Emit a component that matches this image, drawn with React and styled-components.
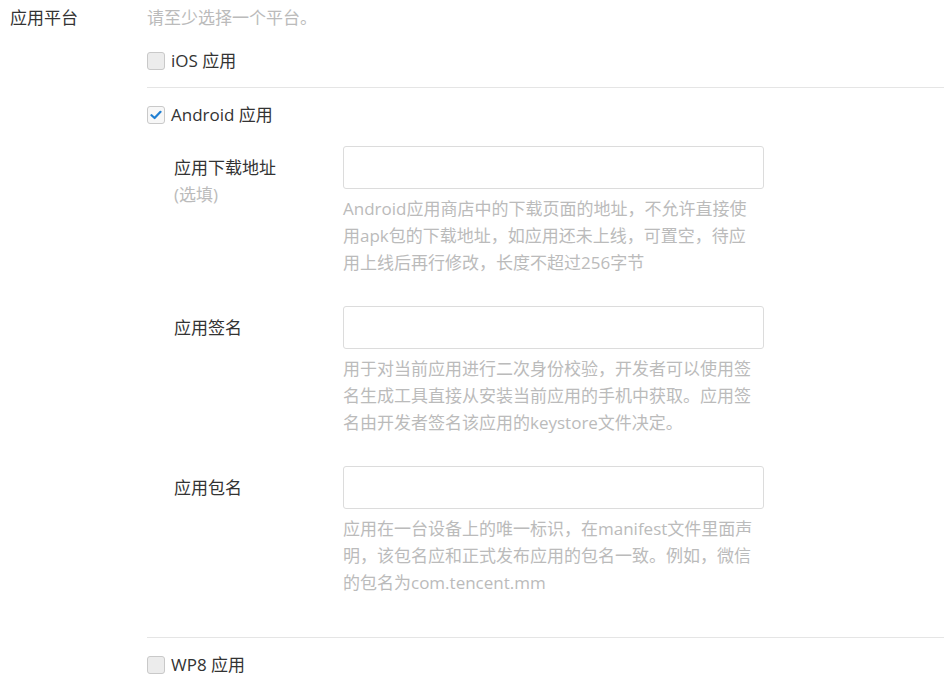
import styled, { createGlobalStyle } from 'styled-components'

const GlobalStyle = createGlobalStyle`
  body {
    margin: 0;
    background: #ffffff;
    font-family: "Open Sans", "Noto Sans CJK SC", sans-serif;
    font-size: 17px;
    line-height: 27px;
    color: #333333;
  }
`

const Page = styled.div`
  display: flex;
  padding-top: 4px;
`

const MainLabel = styled.div`
  width: 137px;
  padding-left: 10px;
  flex-shrink: 0;
`

const Body = styled.div`
  flex: 1;
`

const Hint = styled.div`
  color: #bbbbbb;
  margin-bottom: 3px;
`

const Platform = styled.div`
  padding-bottom: ${({ $open }) => ($open ? '41px' : '0')};
  border-bottom: ${({ $last }) => ($last ? 'none' : '1px solid #e5e5e5')};
`

const CheckRow = styled.label`
  display: flex;
  align-items: center;
  gap: 6px;
  padding: 13px 0;
  color: #333333;
`

const Box = styled.span`
  width: 18px;
  height: 18px;
  box-sizing: border-box;
  border: 1px solid #c9c9c9;
  border-radius: 3px;
  background: ${({ $checked }) => ($checked ? '#f7f7f7' : '#ececec')};
  display: flex;
  align-items: center;
  justify-content: center;
`

const Field = styled.div`
  display: flex;
  padding-left: 27px;
  margin-top: ${({ $first }) => ($first ? '5px' : '30px')};
`

const FieldLabel = styled.div`
  width: 169px;
  flex-shrink: 0;
  padding-top: 8px;
`

const Optional = styled.div`
  color: #bbbbbb;
`

const FieldBody = styled.div`
  width: 421px;
`

const Input = styled.input`
  display: block;
  width: 421px;
  height: 43px;
  box-sizing: border-box;
  border: 1px solid #dcdcdc;
  border-radius: 3px;
  outline: none;
  padding: 0 10px;
  font: inherit;
`

const Help = styled.div`
  margin-top: 6px;
  width: 412px;
  color: #bbbbbb;
`

function Check({ checked, children }) {
  return (
    <CheckRow>
      <Box $checked={checked}>
        {checked && (
          <svg width="12" height="10" viewBox="0 0 12 10">
            <path d="M1.5 5.2 L4.6 8 L10.5 1.8" fill="none" stroke="#1f7fd2" strokeWidth="2.2" strokeLinecap="round" strokeLinejoin="round" />
          </svg>
        )}
      </Box>
      {children}
    </CheckRow>
  )
}

const fields = [
  {
    label: '应用下载地址',
    optional: true,
    help: 'Android应用商店中的下载页面的地址，不允许直接使用apk包的下载地址，如应用还未上线，可置空，待应用上线后再行修改，长度不超过256字节',
  },
  {
    label: '应用签名',
    help: '用于对当前应用进行二次身份校验，开发者可以使用签名生成工具直接从安装当前应用的手机中获取。应用签名由开发者签名该应用的keystore文件决定。',
  },
  {
    label: '应用包名',
    help: '应用在一台设备上的唯一标识，在manifest文件里面声明，该包名应和正式发布应用的包名一致。例如，微信的包名为com.tencent.mm',
  },
]

export default function App() {
  return (
    <>
      <GlobalStyle />
      <Page>
        <MainLabel>应用平台</MainLabel>
        <Body>
          <Hint>请至少选择一个平台。</Hint>
          <Platform>
            <Check>iOS 应用</Check>
          </Platform>
          <Platform $open>
            <Check checked>Android 应用</Check>
            {fields.map((f, i) => (
              <Field key={f.label} $first={i === 0}>
                <FieldLabel>
                  {f.label}
                  {f.optional && <Optional>(选填)</Optional>}
                </FieldLabel>
                <FieldBody>
                  <Input />
                  <Help>{f.help}</Help>
                </FieldBody>
              </Field>
            ))}
          </Platform>
          <Platform $last>
            <Check>WP8 应用</Check>
          </Platform>
        </Body>
      </Page>
    </>
  )
}
